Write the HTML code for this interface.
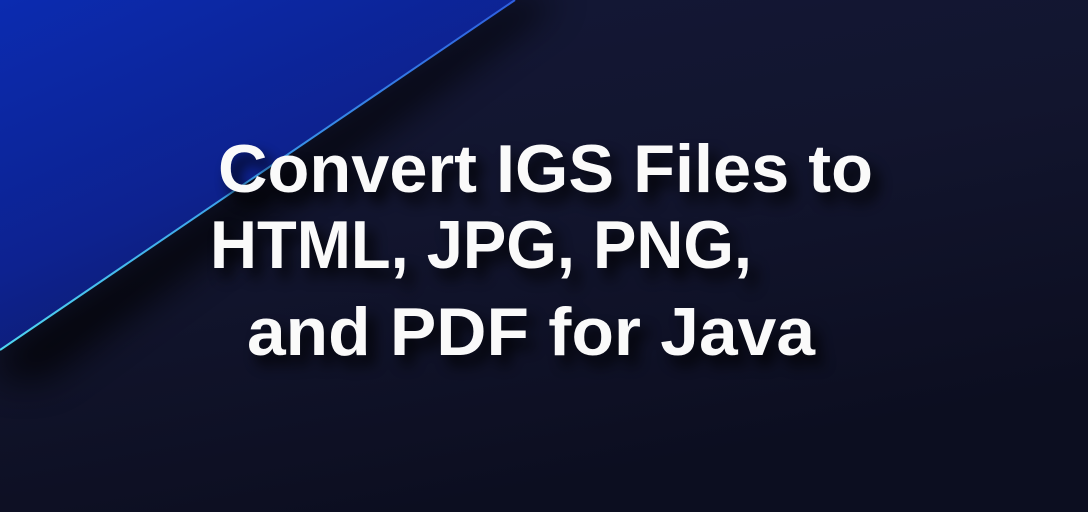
<!DOCTYPE html>
<html><head><style>
html,body{margin:0;padding:0;width:1088px;height:512px;overflow:hidden;background:#11142c}
svg{display:block}
</style></head><body>
<svg width="1088" height="512" viewBox="0 0 1088 512" xmlns="http://www.w3.org/2000/svg">
<defs>
<linearGradient id="bg" x1="0" y1="0" x2="0.4" y2="1">
<stop offset="0" stop-color="#141838"/><stop offset="0.5" stop-color="#12152e"/><stop offset="1" stop-color="#0c0e20"/>
</linearGradient>
<linearGradient id="tri" x1="0" y1="0" x2="0.6" y2="0.9">
<stop offset="0" stop-color="#0b2bb0"/><stop offset="0.6" stop-color="#0d2290"/><stop offset="1" stop-color="#0e1a66"/>
</linearGradient>
<linearGradient id="ln" x1="0" y1="1" x2="1" y2="0">
<stop offset="0" stop-color="#4fd6f0"/><stop offset="0.5" stop-color="#3a9ae8"/><stop offset="1" stop-color="#2f5fe0"/>
</linearGradient>
<filter id="sh" x="-20%" y="-50%" width="140%" height="200%"><feGaussianBlur stdDeviation="18"/></filter>
<filter id="ts" x="-10%" y="-30%" width="120%" height="180%"><feGaussianBlur stdDeviation="7"/></filter>
</defs>
<rect width="1088" height="512" fill="url(#bg)"/>
<polygon points="515,0 560,0 45,380 0,380 0,350" fill="#000" opacity="0.7" filter="url(#sh)"/>
<polygon points="0,0 515,0 0,350" fill="url(#tri)"/>
<line x1="515" y1="0" x2="0" y2="350" stroke="url(#ln)" stroke-width="2"/>
<g font-family="Liberation Sans, Arial, sans-serif" font-weight="bold" font-size="68">
<g fill="#000" opacity="0.85" filter="url(#ts)" transform="translate(8,10)">
<text x="218" y="192" textLength="655" lengthAdjust="spacingAndGlyphs">Convert IGS Files to</text>
<text x="210" y="268" textLength="542" lengthAdjust="spacingAndGlyphs">HTML, JPG, PNG,</text>
<text x="247" y="355" textLength="568" lengthAdjust="spacingAndGlyphs">and PDF for Java</text>
</g>
<g fill="#fafafa">
<text x="218" y="192" textLength="655" lengthAdjust="spacingAndGlyphs">Convert IGS Files to</text>
<text x="210" y="268" textLength="542" lengthAdjust="spacingAndGlyphs">HTML, JPG, PNG,</text>
<text x="247" y="355" textLength="568" lengthAdjust="spacingAndGlyphs">and PDF for Java</text>
</g>
</g>
</svg>
</body></html>
